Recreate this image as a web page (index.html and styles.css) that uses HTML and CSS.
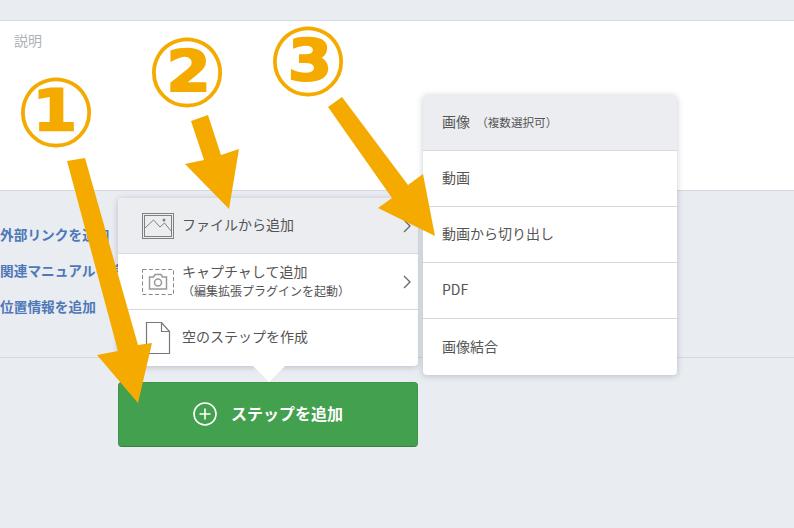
FILE: index.html
```html
<!DOCTYPE html>
<html lang="ja">
<head>
<meta charset="utf-8">
<title>ステップを追加</title>
<link rel="stylesheet" href="styles.css">
</head>
<body>
<div class="page">
  <section class="desc"><span class="desc-label">説明</span></section>
  <section class="links">
    <a class="link">外部リンクを追加</a>
    <a class="link">関連マニュアルを追加</a>
    <a class="link">位置情報を追加</a>
  </section>
  <div class="add-wrap">
    <button class="add-btn">
      <svg class="plus" viewBox="0 0 24 24" width="24" height="24"><circle cx="12" cy="12" r="11" fill="none" stroke="#fff" stroke-width="1.6"/><path d="M12 6.500v11M6.500 12h11" stroke="#fff" stroke-width="1.6" fill="none"/></svg>
      <span class="add-label">ステップを追加</span>
    </button>
  </div>

  <div class="menu menu-main">
    <div class="row active">
      <svg class="ico" viewBox="0 0 32 26" width="32" height="26"><rect x=".5" y=".5" width="31" height="25" fill="none" stroke="#808080"/><rect x="2.500" y="2.500" width="27" height="21" fill="none" stroke="#808080"/><path d="M3 15l8.500-8 6.500 7 4.500-4 7 8.500" fill="none" stroke="#808080"/><circle cx="22" cy="7" r="1.500" fill="#808080"/></svg>
      <span class="row-text">ファイルから追加</span>
      <svg class="chev" viewBox="0 0 8 14" width="8" height="14"><path d="M1 1l6 6-6 6" fill="none" stroke="#666" stroke-width="1.3"/></svg>
    </div>
    <div class="row">
      <svg class="ico" viewBox="0 0 32 26" width="32" height="26"><rect x=".5" y=".5" width="31" height="25" fill="none" stroke="#888" stroke-dasharray="4 2.400"/><path d="M7.500 8h4l1.500-2.500h6L20.500 8h4v12h-17z" fill="none" stroke="#999" stroke-width="1.500"/><circle cx="16" cy="13.500" r="3.500" fill="none" stroke="#999" stroke-width="1.500"/></svg>
      <span class="row-text two">キャプチャして追加<small>（編集拡張プラグインを起動）</small></span>
      <svg class="chev" viewBox="0 0 8 14" width="8" height="14"><path d="M1 1l6 6-6 6" fill="none" stroke="#666" stroke-width="1.3"/></svg>
    </div>
    <div class="row">
      <svg class="ico" viewBox="0 0 32 32" width="32" height="32"><path d="M4.500 .5h15l8 9v22h-23z M19.500 .5v9h8" fill="none" stroke="#777" stroke-width="1.200"/></svg>
      <span class="row-text">空のステップを作成</span>
    </div>
  </div>
  <div class="caret"></div>

  <div class="menu menu-sub">
    <div class="row active"><span class="sub-text">画像 <small class="note">（複数選択可）</small></span></div>
    <div class="row"><span class="sub-text">動画</span></div>
    <div class="row"><span class="sub-text">動画から切り出し</span></div>
    <div class="row"><span class="sub-text">PDF</span></div>
    <div class="row"><span class="sub-text">画像結合</span></div>
  </div>

  <svg class="arrows" viewBox="0 0 794 528" width="794" height="528">
    <g fill="#f5aa00">
      <path d="M67 161L85 158L138 345L152 343L138 403L97 355L118 351z"/>
      <path d="M191 121L208 115L221 155L239 149L229 209L185 164L204 160z"/>
      <path d="M328 107L342 97L408 185L423 174L435 236L378 208L392 198z"/>
    </g>
  </svg>
  <span class="num n1">①</span>
  <span class="num n2">②</span>
  <span class="num n3">③</span>
</div>
</body>
</html>
```
FILE: styles.css
```css
* { box-sizing: border-box; }
html, body { margin: 0; padding: 0; }
body {
  background: #e9ecf1;
  font-family: "Noto Sans CJK JP", "Noto Sans", sans-serif;
  color: #555;
  font-size: 14px;
}
.page {
  position: relative;
  width: 794px;
  height: 528px;
  overflow: hidden;
  padding-top: 20px;
}
.desc {
  height: 171px;
  background: #fff;
  border-top: 1px solid #d5d9df;
  border-bottom: 1px solid #d5d9df;
  padding: 10px 14px;
}
.desc-label { font-size: 14px; line-height: 18px; color: #aeb2b8; display: block; }
.links {
  height: 167px;
  border-bottom: 1px solid #d5d9df;
  padding-top: 33px;
  display: flex;
  flex-direction: column;
  gap: 16px;
}
.link {
  font-size: 13.7px;
  line-height: 20px;
  font-weight: 700;
  color: #4f78b8;
  white-space: nowrap;
}
.add-wrap { padding: 24px 0 0 118px; }
.add-btn {
  width: 300px;
  height: 65px;
  background: #43a04e;
  border: 1px solid #3f9449;
  border-bottom-color: #37803f;
  border-radius: 4px;
  color: #fff;
  font: 700 16px/1 "Noto Sans CJK JP", sans-serif;
  display: flex;
  align-items: center;
  justify-content: center;
  gap: 14px;
  padding: 0 0 2px;
}
.add-label { padding-bottom: 2px; }
.menu {
  position: absolute;
  background: #fff;
  border-radius: 4px;
  box-shadow: 0 1px 6px rgba(60, 70, 90, .28);
  overflow: hidden;
  display: flex;
  flex-direction: column;
}
.menu-main { left: 118px; top: 198px; width: 300px; }
.menu-sub { left: 423px; top: 95px; width: 254px; }
.row {
  flex: none;
  height: 56px;
  display: flex;
  align-items: center;
  border-bottom: 1px solid #d5d9df;
  white-space: nowrap;
  line-height: 20px;
}
.row:last-child { border-bottom: 0; }
.row.active { background: #ebedf1; }
.menu-sub .row { padding-left: 19px; }
.sub-text { padding-bottom: 3px; }
.menu-sub .note { font-size: 11.6px; margin-left: 3px; }
.ico { margin-left: 24px; flex: none; }
.row-text { margin-left: 8px; flex: 1; padding-bottom: 4px; }
.row-text.two { display: flex; flex-direction: column; padding-bottom: 1px; }
.row-text small { font-size: 12px; line-height: 20px; }
.chev { margin-right: 7px; flex: none; }
.caret {
  position: absolute;
  left: 253px;
  top: 366px;
  width: 0;
  height: 0;
  border-left: 16px solid transparent;
  border-right: 16px solid transparent;
  border-top: 16px solid #fff;
}
.arrows { position: absolute; left: 0; top: 0; pointer-events: none; }
.num {
  position: absolute;
  font-family: "DejaVu Sans", sans-serif;
  font-size: 96px;
  line-height: 96px;
  width: 96px;
  text-align: center;
  font-weight: 700;
  color: #f5aa00;
}
.n1 { left: 8px; top: 65px; }
.n2 { left: 139px; top: 25px; }
.n3 { left: 260px; top: 14px; }
```
